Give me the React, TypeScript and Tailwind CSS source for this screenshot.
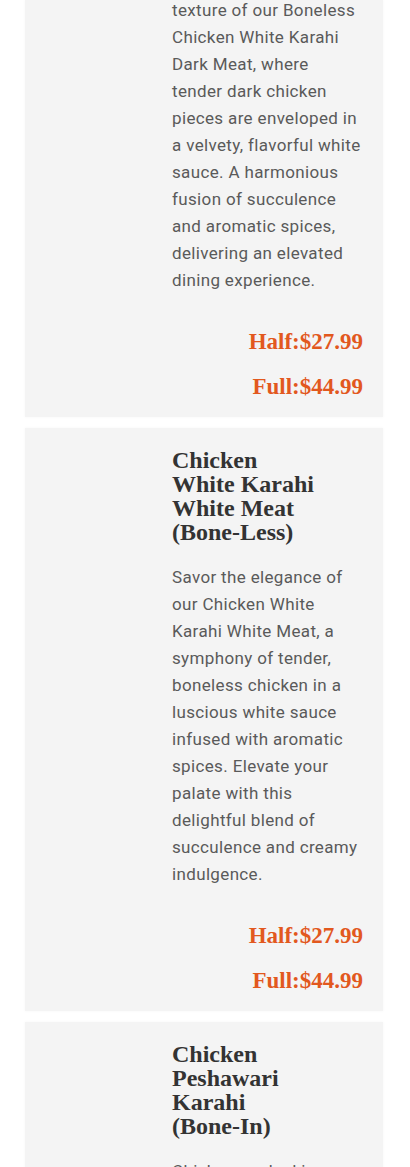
const serif = "font-['Liberation_Serif','DejaVu_Serif',serif]";
const sans = "font-['Roboto','Liberation_Sans',sans-serif]";

type Item = {
  title?: string;
  desc: string;
  half?: string;
  full?: string;
};

const items: Item[] = [
  {
    desc: "texture of our Boneless Chicken White Karahi Dark Meat, where tender dark chicken pieces are enveloped in a velvety, flavorful white sauce. A harmonious fusion of succulence and aromatic spices, delivering an elevated dining experience.",
    half: "Half:$27.99",
    full: "Full:$44.99",
  },
  {
    title: "Chicken White Karahi White Meat (Bone-Less)",
    desc: "Savor the elegance of our Chicken White Karahi White Meat, a symphony of tender, boneless chicken in a luscious white sauce infused with aromatic spices. Elevate your palate with this delightful blend of succulence and creamy indulgence.",
    half: "Half:$27.99",
    full: "Full:$44.99",
  },
  {
    title: "Chicken Peshawari Karahi (Bone-In)",
    desc: "Chicken cooked in a traditional Peshawari style with tomatoes, green chilies and fresh spices.",
    half: "Half:$24.99",
    full: "Full:$39.99",
  },
];

function MenuCard({ item, first }: { item: Item; first?: boolean }) {
  return (
    <div className={`flex bg-[#f4f4f4] shadow-[0_0_3px_rgba(0,0,0,0.04)] ${first ? "pt-0" : "pt-5"} pb-[15px]`}>
      <div className="w-[147px] shrink-0" />
      <div className="w-[191px] flex flex-col">
        {item.title && (
          <h3 className={`${serif} w-[146px] text-[24px] leading-[24px] font-bold text-[#333]`}>
            {item.title}
          </h3>
        )}
        <p
          className={`${sans} text-[17px] leading-[27px] font-normal text-[#5a5a5a] tracking-[0.35px] ${
            first ? "-mt-[3px]" : "mt-5"
          }`}
        >
          {item.desc}
        </p>
        <div className={`${serif} mt-[33px] flex flex-col items-end gap-[15px] text-[23px] leading-[30px] font-bold text-[#e2581e]`}>
          <span>{item.half}</span>
          <span>{item.full}</span>
        </div>
      </div>
    </div>
  );
}

export default function App() {
  return (
    <div className="min-h-screen bg-white pl-[25px] pr-[27px] h-[1167px] overflow-hidden">
      <div className="flex flex-col gap-[11px]">
        {items.map((item, i) => (
          <MenuCard key={i} item={item} first={i === 0} />
        ))}
      </div>
    </div>
  );
}
